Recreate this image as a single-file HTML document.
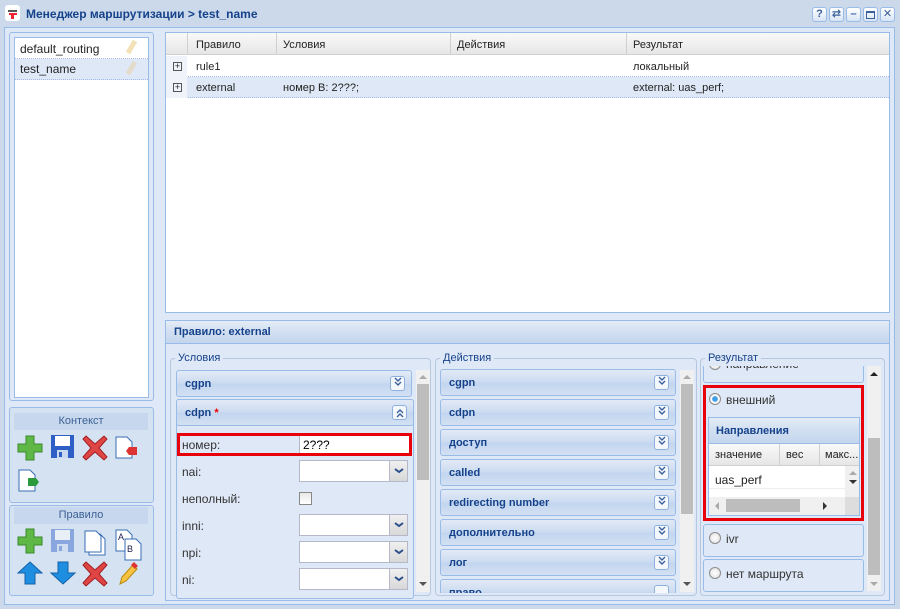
<!DOCTYPE html>
<html><head><meta charset="utf-8"><style>
*{box-sizing:border-box;margin:0;padding:0}
body{width:900px;height:609px;overflow:hidden;background:#cbd9ea;font-family:"Liberation Sans","DejaVu Sans",sans-serif;font-size:11px;color:#222;position:relative}
.a{position:absolute}
.t{font-size:12px;font-weight:bold;color:#15428b}
.ph{background:linear-gradient(#e4ecf7,#d0def0 55%,#c4d6ee);border:1px solid #99bbe8;font-weight:bold;color:#15428b;font-size:11px}
.tool{position:absolute;width:15px;height:15px;border:1px solid #99bbe8;border-radius:3px;background:linear-gradient(#fff,#d7e4f5);color:#3b5f9a;font-size:11px;text-align:center;line-height:12px;font-weight:bold}
.cb{position:absolute;width:236px;height:27px;border:1px solid #99bbe8;border-radius:3px;background:linear-gradient(#e2eaf6,#cbdbf0 50%,#c2d5ef 51%,#d2e0f2);font-weight:bold;color:#15428b;font-size:11px;padding:7px 0 0 8px}
.cb .tg{position:absolute;right:6px;top:5px;width:15px;height:15px;border:1px solid #8eb0dc;border-radius:3px;background:#f4f8fd}
.cmb{position:absolute;width:109px;height:22px;border:1px solid #b5b8c8;background:#fff}
.cmb:after{content:"";position:absolute;right:0;top:0;width:17px;height:20px;background:linear-gradient(#f0f0f0,#d8d8d8);border-left:1px solid #b5b8c8}
.lbl{position:absolute;font-size:12px;color:#333}
.fs{position:absolute;border:1px solid #b5c8e0;border-radius:4px}
.leg{position:absolute;top:-7px;left:4px;background:#dfe8f6;padding:0 3px;font-size:11px;color:#15428b;line-height:12px}
.sb{position:absolute;background:#f0f0f0}
.th{position:absolute;background:#bdbdbd}
.rp{position:absolute;border:1px solid #99bbe8;border-radius:3px;background:#dfe8f6}
.radio{position:absolute;width:12px;height:12px;border-radius:50%;border:1px solid #8c8c8c;background:radial-gradient(#fff,#ddd)}
</style></head><body>
<div class="a" style="left:5px;top:5px;width:15px;height:16px;background:#fff;border-radius:3px"></div>
<div class="a" style="left:8px;top:10px;width:9px;height:2px;background:#555"></div>
<div class="a" style="left:9px;top:13px;width:8px;height:2px;background:#e23"></div>
<div class="a" style="left:11px;top:15px;width:3px;height:4px;background:#e23"></div>
<div class="a t" style="left:26px;top:7px">Менеджер маршрутизации &gt; test_name</div>
<div class="tool" style="left:812px;top:7px">?</div>
<div class="tool" style="left:829px;top:7px">⇄</div>
<div class="tool" style="left:846px;top:7px">–</div>
<div class="tool" style="left:863px;top:7px"><div style="margin:3px 2px;height:8px;border:1px solid #3b5f9a;border-top-width:2px"></div></div>
<div class="tool" style="left:880px;top:7px;font-weight:normal">✕</div>
<div class="a" style="left:4px;top:27px;width:891px;height:578px;background:#dfe8f6;border:1px solid #99bbe8"></div>
<div class="a" style="left:9px;top:32px;width:145px;height:369px;border:1px solid #99bbe8;border-radius:3px;background:#dfe8f6"></div>
<div class="a" style="left:14px;top:37px;width:135px;height:361px;background:#fff;border:1px solid #99bbe8"></div>
<div class="a" style="left:15px;top:38px;width:133px;height:21px;border-bottom:1px dotted #a3bae9;font-size:12px;padding:4px 0 0 5px">default_routing</div>
<div class="a" style="left:15px;top:59px;width:133px;height:21px;border-bottom:1px dotted #a3bae9;background:#dfe8f6;font-size:12px;padding:3px 0 0 5px">test_name</div>
<div class="a" style="left:129px;top:40px;width:5px;height:14px;background:#f3e2b8;transform:rotate(30deg)"></div>
<div class="a" style="left:129px;top:61px;width:5px;height:14px;background:#e4dccb;transform:rotate(30deg)"></div>
<div class="a" style="left:9px;top:407px;width:145px;height:96px;border:1px solid #99bbe8;border-radius:3px;background:#d5e2f2"></div>
<div class="a" style="left:14px;top:413px;width:134px;height:17px;background:#c7d8ee;text-align:center;color:#3c5f93;font-size:11px;line-height:17px">Контекст</div>
<div class="a" style="left:9px;top:505px;width:145px;height:91px;border:1px solid #99bbe8;border-radius:3px;background:#d5e2f2"></div>
<div class="a" style="left:14px;top:507px;width:134px;height:17px;background:#c7d8ee;text-align:center;color:#3c5f93;font-size:11px;line-height:17px">Правило</div>
<svg class="a" style="left:0;top:0" width="160" height="609">
<defs>
<g id="plus"><path d="M8 0h8v8h8v8h-8v8h-8v-8h-8v-8h8z" fill="#5fb845" stroke="#3a8a2a"/></g>
<g id="x"><path d="M3 0l9 8 9-8 3 3-8 9 8 9-3 3-9-8-9 8-3-3 8-9-8-9z" fill="#e04545" stroke="#a02020"/></g>
<g id="flop"><rect x="0" y="0" width="23" height="23" fill="#2e5fc7"/><rect x="4" y="1" width="15" height="10" fill="#fff"/><rect x="6" y="15" width="11" height="8" fill="#c8d8f0"/><rect x="8" y="17" width="3" height="5" fill="#2e5fc7"/></g>
<g id="doc"><path d="M1 1h11l5 5v16h-16z" fill="#fff" stroke="#3a6db5"/></g>
</defs>
<use href="#plus" x="18" y="436"/><use href="#flop" x="51" y="435"/><use href="#x" x="83" y="436"/>
<use href="#doc" x="115" y="436"/><path d="M137 447h-8l-3 4 3 4h8z" fill="#d33"/>
<use href="#doc" x="18" y="469"/><path d="M28 478h8l3 4-3 4h-8z" fill="#2a9a3a"/>
<use href="#plus" x="18" y="529"/><g opacity=".45"><use href="#flop" x="51" y="529"/></g>
<use href="#doc" x="88" y="533"/><use href="#doc" x="84" y="530"/>
<use href="#doc" x="115" y="529"/><text x="118" y="540" font-size="9" fill="#225">A</text><use href="#doc" x="124" y="538"/><text x="127" y="552" font-size="9" fill="#225">B</text>
<path d="M30 562l12 11h-7v11h-10v-11h-7z" fill="#1e8ee0" stroke="#1560a8"/>
<path d="M63 584l12-11h-7v-11h-10v11h-7z" fill="#1e8ee0" stroke="#1560a8"/>
<use href="#x" x="83" y="562"/>
<path d="M120 584l2-7 11-12 4 4-11 12z" fill="#f5c242" stroke="#b88a10"/><path d="M131 565l3-3 4 4-3 3z" fill="#d33"/>
</svg>
<div class="a" style="left:165px;top:32px;width:725px;height:281px;border:1px solid #99bbe8;background:#fff"></div>
<div class="a" style="left:166px;top:33px;width:723px;height:22px;background:linear-gradient(#f9f9f9,#e6e6e6);border-bottom:1px solid #d0d0d0"></div>
<div class="a" style="left:187px;top:33px;height:22px;border-left:1px solid #d0d0d0"></div>
<div class="a" style="left:276px;top:33px;height:22px;border-left:1px solid #d0d0d0"></div>
<div class="a" style="left:450px;top:33px;height:22px;border-left:1px solid #d0d0d0"></div>
<div class="a" style="left:626px;top:33px;height:22px;border-left:1px solid #d0d0d0"></div>
<div class="a" style="left:196px;top:39px">Правило</div>
<div class="a" style="left:283px;top:39px">Условия</div>
<div class="a" style="left:457px;top:39px">Действия</div>
<div class="a" style="left:633px;top:39px">Результат</div>
<div class="a" style="left:166px;top:56px;width:723px;height:21px;border-bottom:1px dotted #a3bae9"></div>
<div class="a" style="left:166px;top:77px;width:723px;height:21px;background:#dfe8f6;border-bottom:1px dotted #a3bae9"></div>
<div class="a" style="left:166px;top:56px;width:21px;height:42px;background:#f0f4fa"></div>
<div class="a" style="left:173px;top:62px;width:9px;height:9px;border:1px solid #555;font-size:9px;line-height:7px;text-align:center">+</div>
<div class="a" style="left:173px;top:83px;width:9px;height:9px;border:1px solid #555;font-size:9px;line-height:7px;text-align:center">+</div>
<div class="a" style="left:196px;top:61px">rule1</div>
<div class="a" style="left:633px;top:61px">локальный</div>
<div class="a" style="left:196px;top:82px">external</div>
<div class="a" style="left:283px;top:82px">номер B: 2???;</div>
<div class="a" style="left:633px;top:82px">external: uas_perf;</div>
<div class="a" style="left:165px;top:320px;width:725px;height:281px;border:1px solid #99bbe8;background:#dfe8f6"></div>
<div class="a ph" style="left:165px;top:320px;width:725px;height:24px;padding:5px 0 0 8px">Правило: external</div>
<div class="fs" style="left:170px;top:358px;width:261px;height:238px"><div class="leg">Условия</div></div>
<div class="sb" style="left:416px;top:370px;width:14px;height:222px"></div>
<div class="th" style="left:417px;top:384px;width:12px;height:96px"></div>
<div class="a" style="left:419px;top:375px;border:4px solid transparent;border-bottom:4px solid #aaa;border-top:0"></div>
<div class="a" style="left:419px;top:582px;border:4px solid transparent;border-top:4px solid #555;border-bottom:0"></div>
<div class="cb" style="left:176px;top:370px">cgpn<span class="tg"></span></div>
<div class="a" style="left:176px;top:399px;width:238px;height:200px;border:1px solid #99bbe8;border-radius:3px;background:#dfe8f6"></div>
<div class="cb" style="left:176px;top:399px;width:238px">cdpn <span style="color:#e00">*</span><span class="tg"></span></div>
<div class="a" style="left:177px;top:433px;width:235px;height:23px;border:3px solid #e8000b;background:#dfe8f6"></div>
<div class="a" style="left:299px;top:436px;width:110px;height:17px;background:#fff;border-left:1px solid #b5b8c8"></div>
<div class="lbl" style="left:182px;top:438px">номер:</div>
<div class="lbl" style="left:303px;top:438px;color:#000">2???</div>
<div class="lbl" style="left:182px;top:465px">nai:</div>
<div class="cmb" style="left:299px;top:460px"></div>
<div class="lbl" style="left:182px;top:492px">неполный:</div>
<div class="a" style="left:299px;top:492px;width:13px;height:13px;border:1px solid #888;background:linear-gradient(#e8e8e8,#fff)"></div>
<div class="lbl" style="left:182px;top:519px">inni:</div>
<div class="cmb" style="left:299px;top:514px"></div>
<div class="lbl" style="left:182px;top:546px">npi:</div>
<div class="cmb" style="left:299px;top:541px"></div>
<div class="lbl" style="left:182px;top:573px">ni:</div>
<div class="cmb" style="left:299px;top:568px"></div>
<div class="fs" style="left:435px;top:358px;width:262px;height:238px"><div class="leg">Действия</div></div>
<div class="sb" style="left:680px;top:370px;width:14px;height:222px"></div>
<div class="th" style="left:681px;top:384px;width:12px;height:130px"></div>
<div class="a" style="left:683px;top:375px;border:4px solid transparent;border-bottom:4px solid #aaa;border-top:0"></div>
<div class="a" style="left:683px;top:582px;border:4px solid transparent;border-top:4px solid #555;border-bottom:0"></div>
<div style="position:absolute;left:0;top:0;width:900px;height:593px;overflow:hidden">
<div class="cb" style="left:440px;top:369px">cgpn<span class="tg"></span></div>
<div class="cb" style="left:440px;top:399px">cdpn<span class="tg"></span></div>
<div class="cb" style="left:440px;top:429px">доступ<span class="tg"></span></div>
<div class="cb" style="left:440px;top:459px">called<span class="tg"></span></div>
<div class="cb" style="left:440px;top:489px">redirecting number<span class="tg"></span></div>
<div class="cb" style="left:440px;top:519px">дополнительно<span class="tg"></span></div>
<div class="cb" style="left:440px;top:549px">лог<span class="tg"></span></div>
<div class="cb" style="left:440px;top:579px">право<span class="tg"></span></div>
</div>
<div class="fs" style="left:700px;top:358px;width:185px;height:238px"><div class="leg">Результат</div></div>
<div style="position:absolute;left:703px;top:366px;width:161px;height:17px;overflow:hidden">
<div class="rp" style="left:0;top:-12px;width:161px;height:29px"></div>
<div class="radio" style="left:6px;top:-8px"></div>
<div class="lbl" style="left:23px;top:-9px">направление</div>
</div>
<div class="sb" style="left:867px;top:366px;width:14px;height:225px"></div>
<div class="th" style="left:868px;top:438px;width:12px;height:137px"></div>
<div class="a" style="left:870px;top:372px;border:4px solid transparent;border-bottom:4px solid #222;border-top:0"></div>
<div class="a" style="left:870px;top:582px;border:4px solid transparent;border-top:4px solid #aaa;border-bottom:0"></div>
<div class="a" style="left:703px;top:385px;width:161px;height:136px;border:3px solid #e8000b;background:#dfe8f6"></div>
<div class="radio" style="left:709px;top:393px;background:radial-gradient(#3fa0e8 35%,#fff 45%,#ddd)"></div>
<div class="lbl" style="left:726px;top:393px">внешний</div>
<div class="a" style="left:708px;top:417px;width:152px;height:99px;border:1px solid #99bbe8;background:#fff;overflow:hidden">
 <div class="ph" style="position:absolute;left:-1px;top:-1px;width:152px;height:27px;padding:7px 0 0 7px;font-size:11px">Направления</div>
 <div style="position:absolute;left:0;top:26px;width:152px;height:22px;background:linear-gradient(#f9f9f9,#e6e6e6);border-bottom:1px solid #d0d0d0;font-size:11px">
  <span style="position:absolute;left:6px;top:5px">значение</span>
  <span style="position:absolute;left:70px;top:0;height:22px;border-left:1px solid #d0d0d0"></span>
  <span style="position:absolute;left:77px;top:5px">вес</span>
  <span style="position:absolute;left:110px;top:0;height:22px;border-left:1px solid #d0d0d0"></span>
  <span style="position:absolute;left:116px;top:5px">макс...</span>
 </div>
 <div style="position:absolute;left:6px;top:55px;font-size:12px">uas_perf</div>
 <div style="position:absolute;left:0;top:70px;width:136px;border-top:1px solid #eee"></div>
 <div style="position:absolute;left:136px;top:48px;width:15px;height:31px;background:#f0f0f0"></div>
 <div style="position:absolute;left:0;top:79px;width:136px;height:19px;background:#f0f0f0"></div>
 <div style="position:absolute;left:17px;top:81px;width:74px;height:13px;background:#bdbdbd"></div>
 <div style="position:absolute;left:136px;top:79px;width:15px;height:19px;background:#ddd"></div>
 <div style="position:absolute;left:114px;top:84px;border:4px solid transparent;border-left:4px solid #333;border-right:0"></div>
 <div style="position:absolute;left:6px;top:84px;border:4px solid transparent;border-right:4px solid #aaa;border-left:0"></div>
 <div style="position:absolute;left:140px;top:62px;border:4px solid transparent;border-top:4px solid #333;border-bottom:0"></div>
 <div style="position:absolute;left:140px;top:53px;border:4px solid transparent;border-bottom:4px solid #aaa;border-top:0"></div>
</div>
<div class="rp" style="left:703px;top:524px;width:161px;height:33px"></div>
<div class="radio" style="left:709px;top:532px"></div>
<div class="lbl" style="left:726px;top:532px">ivr</div>
<div class="rp" style="left:703px;top:559px;width:161px;height:33px"></div>
<div class="radio" style="left:709px;top:567px"></div>
<div class="lbl" style="left:726px;top:567px">нет маршрута</div>
<svg class="a" style="left:0;top:0;pointer-events:none" width="900" height="609">
<g fill="none" stroke="#3b5f9a" stroke-width="1.4">
<path d="M395 378l3 3 3-3M395 382l3 3 3-3"/>
<path d="M397 413l3-3 3 3M397 417l3-3 3 3"/>
<path d="M659 377l3 3 3-3M659 381l3 3 3-3"/>
<path d="M659 407l3 3 3-3M659 411l3 3 3-3"/>
<path d="M659 437l3 3 3-3M659 441l3 3 3-3"/>
<path d="M659 467l3 3 3-3M659 471l3 3 3-3"/>
<path d="M659 497l3 3 3-3M659 501l3 3 3-3"/>
<path d="M659 527l3 3 3-3M659 531l3 3 3-3"/>
<path d="M659 557l3 3 3-3M659 561l3 3 3-3"/>
</g>
<g fill="none" stroke="#2b4f8a" stroke-width="2">
<path d="M395 469l4 3 4-3M395 523l4 3 4-3M395 550l4 3 4-3M395 577l4 3 4-3"/>
</g>
</svg>
</body></html>
